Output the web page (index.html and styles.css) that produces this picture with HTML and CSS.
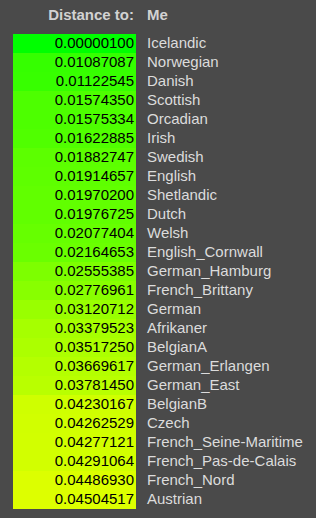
FILE: index.html
```
<!DOCTYPE html>
<html>
<head>
<meta charset="utf-8">
<link rel="stylesheet" href="styles.css">
</head>
<body>
<div class="panel">
  <div class="header">
    <div class="h-label">Distance to:</div>
    <div class="h-name">Me</div>
  </div>
  <div class="rows">
    <div class="val" style="background:rgb(0,255,0)">0.00000100</div><div class="name">Icelandic</div>
    <div class="val" style="background:rgb(53,255,0)">0.01087087</div><div class="name">Norwegian</div>
    <div class="val" style="background:rgb(55,255,0)">0.01122545</div><div class="name">Danish</div>
    <div class="val" style="background:rgb(77,255,0)">0.01574350</div><div class="name">Scottish</div>
    <div class="val" style="background:rgb(77,255,0)">0.01575334</div><div class="name">Orcadian</div>
    <div class="val" style="background:rgb(80,255,0)">0.01622885</div><div class="name">Irish</div>
    <div class="val" style="background:rgb(92,255,0)">0.01882747</div><div class="name">Swedish</div>
    <div class="val" style="background:rgb(94,255,0)">0.01914657</div><div class="name">English</div>
    <div class="val" style="background:rgb(97,255,0)">0.01970200</div><div class="name">Shetlandic</div>
    <div class="val" style="background:rgb(97,255,0)">0.01976725</div><div class="name">Dutch</div>
    <div class="val" style="background:rgb(102,255,0)">0.02077404</div><div class="name">Welsh</div>
    <div class="val" style="background:rgb(106,255,0)">0.02164653</div><div class="name">English_Cornwall</div>
    <div class="val" style="background:rgb(125,255,0)">0.02555385</div><div class="name">German_Hamburg</div>
    <div class="val" style="background:rgb(136,255,0)">0.02776961</div><div class="name">French_Brittany</div>
    <div class="val" style="background:rgb(153,255,0)">0.03120712</div><div class="name">German</div>
    <div class="val" style="background:rgb(166,255,0)">0.03379523</div><div class="name">Afrikaner</div>
    <div class="val" style="background:rgb(172,255,0)">0.03517250</div><div class="name">BelgianA</div>
    <div class="val" style="background:rgb(180,255,0)">0.03669617</div><div class="name">German_Erlangen</div>
    <div class="val" style="background:rgb(185,255,0)">0.03781450</div><div class="name">German_East</div>
    <div class="val" style="background:rgb(207,255,0)">0.04230167</div><div class="name">BelgianB</div>
    <div class="val" style="background:rgb(209,255,0)">0.04262529</div><div class="name">Czech</div>
    <div class="val" style="background:rgb(210,255,0)">0.04277121</div><div class="name">French_Seine-Maritime</div>
    <div class="val" style="background:rgb(210,255,0)">0.04291064</div><div class="name">French_Pas-de-Calais</div>
    <div class="val" style="background:rgb(220,255,0)">0.04486930</div><div class="name">French_Nord</div>
    <div class="val" style="background:rgb(221,255,0)">0.04504517</div><div class="name">Austrian</div>
  </div>
</div>
</body>
</html>
```
FILE: styles.css
```
html, body {
  margin: 0;
  padding: 0;
  background: #4a4a4a;
}
body {
  width: 316px;
  height: 518px;
  overflow: hidden;
  font-family: "Liberation Sans", Arial, sans-serif;
  font-size: 15px;
}
.panel {
  padding: 5px 0 0 13px;
}
.header {
  display: grid;
  grid-template-columns: 121px 1fr;
  column-gap: 13px;
  font-weight: bold;
  color: #d2d2d2;
  line-height: 19px;
  height: 19px;
}
.h-label {
  text-align: right;
}
.rows {
  margin-top: 10px;
  display: grid;
  grid-template-columns: 123px 1fr;
  column-gap: 11px;
  grid-auto-rows: 19px;
}
.val,
.name {
  line-height: 17px;
  padding-bottom: 2px;
}
.val {
  color: #000;
  text-align: right;
  padding-right: 2px;
}
.name {
  color: #dcdcdc;
  white-space: nowrap;
}
```
